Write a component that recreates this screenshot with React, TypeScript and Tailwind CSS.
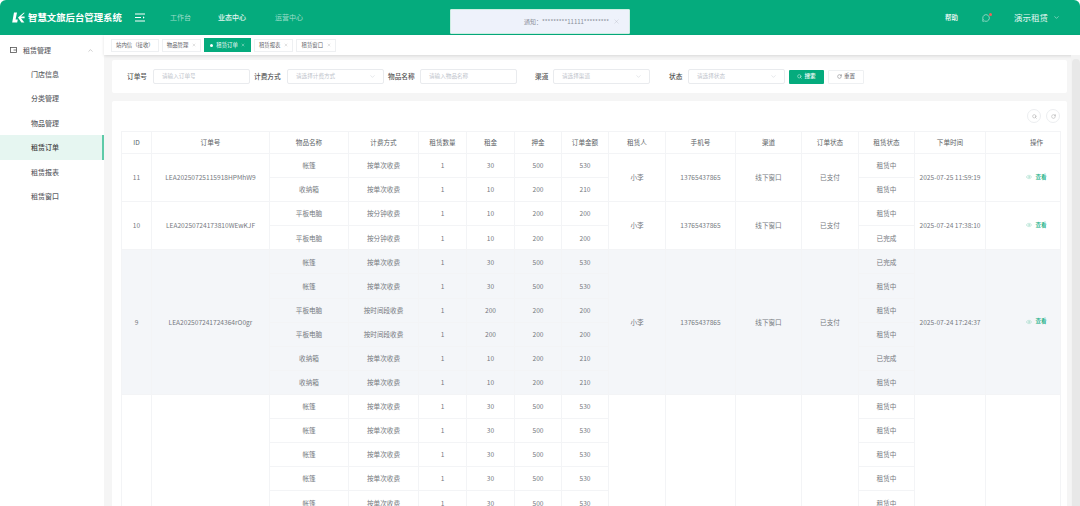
import React from "react";
import { ChevronDown, ChevronUp, Search, RotateCw, X, MessageCircle, Eye } from "lucide-react";

const cols = [31, 118, 79, 70, 48, 48, 47, 47, 57, 70, 66, 57, 56, 71, 75];
const headers = ["ID", "订单号", "物品名称", "计费方式", "租赁数量", "租金", "押金", "订单金额", "租赁人", "手机号", "渠道", "订单状态", "租赁状态", "下单时间", "操作"];

type Item = [string, string, string, string, string, string, string];
const tent = (s: string): Item => ["帐篷", "按单次收费", "1", "30", "500", "530", s];
const box = (s: string): Item => ["收纳箱", "按单次收费", "1", "10", "200", "210", s];
const padMin = (s: string): Item => ["平板电脑", "按分钟收费", "1", "10", "200", "200", s];
const padTime = (s: string): Item => ["平板电脑", "按时间段收费", "1", "200", "200", "200", s];

type Order = { id: string; no: string; person: string; phone: string; channel: string; status: string; time: string; hl?: boolean; action: boolean; items: Item[] };

const orders: Order[] = [
  { id: "11", no: "LEA20250725115918HPMhW9", person: "小李", phone: "13765437865", channel: "线下窗口", status: "已支付", time: "2025-07-25 11:59:19", action: true, items: [tent("租赁中"), box("租赁中")] },
  { id: "10", no: "LEA20250724173810WEwKJF", person: "小李", phone: "13765437865", channel: "线下窗口", status: "已支付", time: "2025-07-24 17:38:10", action: true, items: [padMin("租赁中"), padMin("已完成")] },
  { id: "9", no: "LEA202507241724364rO0gr", person: "小李", phone: "13765437865", channel: "线下窗口", status: "已支付", time: "2025-07-24 17:24:37", hl: true, action: true, items: [tent("已完成"), tent("租赁中"), padTime("租赁中"), padTime("租赁中"), box("已完成"), box("租赁中")] },
  { id: "", no: "", person: "", phone: "", channel: "", status: "", time: "", action: false, items: [tent("租赁中"), tent("租赁中"), tent("租赁中"), tent("租赁中"), tent("租赁中")] },
];

const cell = "border-r border-b border-[#f3f4f6] text-center align-middle p-0";

function OrderRows({ o }: { o: Order }) {
  const n = o.items.length;
  return (
    <>
      {o.items.map((it, i) => (
        <tr key={i} className={`h-[24.1px] ${o.hl ? "bg-[#f4f6f9]" : "bg-white"}`}>
          {i === 0 && <td rowSpan={n} className={`${cell} border-l`}>{o.id}</td>}
          {i === 0 && <td rowSpan={n} className={cell}>{o.no}</td>}
          {it.slice(0, 6).map((v, k) => (
            <td key={k} className={cell}>{v}</td>
          ))}
          {i === 0 && <td rowSpan={n} className={cell}>{o.person}</td>}
          {i === 0 && <td rowSpan={n} className={cell}>{o.phone}</td>}
          {i === 0 && <td rowSpan={n} className={cell}>{o.channel}</td>}
          {i === 0 && <td rowSpan={n} className={cell}>{o.status}</td>}
          <td className={cell}>{it[6]}</td>
          {i === 0 && <td rowSpan={n} className={cell}>{o.time}</td>}
          {i === 0 && (
            <td rowSpan={n} className={`${cell} pl-[27px]`}>
              {o.action && (
                <span className="inline-flex items-center gap-[3px] text-[5.5px] font-medium text-[#05ab7d]">
                  <Eye size={6} strokeWidth={1.5} className="text-[#7fcfb5]" />
                  查看
                </span>
              )}
            </td>
          )}
        </tr>
      ))}
    </>
  );
}

function Field({ label, placeholder, labelW, w, select }: { label: string; placeholder: string; labelW: string; w: string; select?: boolean }) {
  return (
    <div className="flex shrink-0 items-center">
      <span className={`${labelW} text-[6.7px] font-medium text-[#555]`}>{label}</span>
      <div className={`${w} flex h-[15px] items-center justify-between rounded-[2px] border border-[#e9ebee] bg-white pl-[8px] pr-[7px] text-[5.6px] text-[#c0c4cc]`}>
        <span>{placeholder}</span>
        {select && <ChevronDown size={7} strokeWidth={1.2} className="text-[#b8bcc4]" />}
      </div>
    </div>
  );
}

const subs = ["门店信息", "分类管理", "物品管理", "租赁订单", "租赁报表", "租赁窗口"];

export default function App() {
  return (
    <div
      className="relative flex h-[506px] w-[1080px] flex-col overflow-hidden bg-white text-[#606266]"
      style={{ fontFamily: '"Noto Sans CJK SC", "Noto Sans", sans-serif' }}
    >
      {/* header */}
      <header className="flex h-[35px] shrink-0 items-center rounded-t-[6px] bg-[#05ab7d] text-white">
        <div className="flex w-[127px] shrink-0 items-center pl-[12px]">
          <svg width="13" height="11" viewBox="0 0 13 11" className="mr-[3px] shrink-0" fill="white">
            <path d="M2 0.5h3L3.6 7.6h2.2L5.2 10.5H0.2z" />
            <path d="M6 5.6L11.6 0.8h1.2L9 4.6l3.6 0v1.6L9 6.2l3.4 4.3H9.4z" />
          </svg>
          <span className="whitespace-nowrap text-[9.4px] font-bold">智慧文旅后台管理系统</span>
        </div>
        <svg width="10" height="9" viewBox="0 0 10 9" className="ml-[8px] shrink-0" fill="none" stroke="white" strokeWidth="1">
          <path d="M0 1h10M0 4.5h6M0 8h10" />
          <path d="M8 3.2l1.6 1.3L8 5.8z" fill="white" stroke="none" />
        </svg>
        <nav className="ml-[25px] flex items-center text-[7px]">
          <span className="w-[48px] text-white/60">工作台</span>
          <span className="w-[57px] text-white/90 font-medium">业态中心</span>
          <span className="text-white/60">运营中心</span>
        </nav>
        <div className="ml-auto flex items-center">
          <span className="text-[6.5px] font-medium">帮助</span>
          <span className="relative ml-[24px] flex">
            <MessageCircle size={8} strokeWidth={1.5} />
            <span className="absolute -right-[2px] -top-[1px] h-[3px] w-[3px] rounded-full bg-[#f0605a]" />
          </span>
          <span className="ml-[24px] text-[8.5px] text-white/90">演示租赁</span>
          <ChevronDown size={7} strokeWidth={1.5} className="ml-[5px] mr-[20px]" />
        </div>
      </header>

      {/* toast */}
      <div className="absolute left-[450px] top-[9px] z-10 flex h-[25px] w-[180px] items-center rounded-[1px] border border-[#cdeee2] bg-[#eef2fb] pl-[73px] pr-[9px] text-[6px] text-[#8a8f99]">
        <span className="flex-1 whitespace-nowrap">通知：*********11111*********</span>
        <X size={7} strokeWidth={1} className="text-[#a8acb4]" />
      </div>

      <div className="flex min-h-0 flex-1">
        {/* sidebar */}
        <aside className="w-[104px] shrink-0 bg-white pt-[3px] text-[7px] text-[#5f6368]">
          <div className="flex h-[24px] items-center pl-[10px] pr-[10px]">
            <svg width="7" height="6" viewBox="0 0 7 6" fill="none" stroke="#555" strokeWidth="0.8" className="mr-[6px]">
              <rect x="0.5" y="0.5" width="6" height="5" />
              <path d="M3.5 3h3" />
            </svg>
            <span className="font-medium">租赁管理</span>
            <ChevronUp size={7} strokeWidth={1.2} className="ml-auto text-[#777]" />
          </div>
          {subs.map((s) => (
            <div
              key={s}
              className={`flex h-[24.4px] items-center pl-[31px] font-medium ${s === "租赁订单" ? "border-r-[2px] border-[#5fcaa8] bg-[#e6f6f1] text-[#444]" : ""}`}
            >
              {s}
            </div>
          ))}
        </aside>

        <main className="flex min-w-0 flex-1 flex-col bg-[#f5f5f5]">
          {/* tabs */}
          <div className="flex h-[20px] shrink-0 items-center gap-[3px] bg-white pl-[7px] text-[5.4px] text-[#606266] shadow-[0_1px_3px_rgba(0,0,0,0.12)]">
            <span className="flex h-[13px] items-center border border-[#eef0f2] px-[4px]">站内信（接收）</span>
            <span className="flex h-[13px] items-center gap-[4px] border border-[#eef0f2] px-[4px]">物品管理<X size={4} className="text-[#aaa]" /></span>
            <span className="flex h-[14px] items-center gap-[3px] bg-[#05ab7d] px-[6px] text-white">
              <span className="h-[3px] w-[3px] rounded-full bg-white" />租赁订单<X size={4} />
            </span>
            <span className="flex h-[13px] items-center gap-[4px] border border-[#eef0f2] px-[4px]">租赁报表<X size={4} className="text-[#aaa]" /></span>
            <span className="flex h-[13px] items-center gap-[4px] border border-[#eef0f2] px-[4px]">租赁窗口<X size={4} className="text-[#aaa]" /></span>
          </div>

          <div className="flex min-h-0 flex-1">
            <div className="flex min-w-0 flex-1 flex-col pl-[8px] pr-[4px] pt-[5px]">
              {/* filter */}
              <div className="flex h-[33px] shrink-0 items-center rounded-[2px] bg-white pl-[15px]">
                <Field label="订单号" labelW="w-[26px]" w="w-[97px]" placeholder="请输入订单号" />
                <Field label="计费方式" labelW="w-[33px] ml-[4px]" w="w-[97px]" placeholder="请选择计费方式" select />
                <Field label="物品名称" labelW="w-[32px] ml-[4px]" w="w-[97px]" placeholder="请输入物品名称" />
                <Field label="渠道" labelW="w-[18px] ml-[18px]" w="w-[97px]" placeholder="请选择渠道" select />
                <Field label="状态" labelW="w-[19px] ml-[19px]" w="w-[97px]" placeholder="请选择状态" select />
                <button className="ml-[4px] flex h-[14px] w-[35px] items-center justify-center gap-[2px] rounded-[1px] bg-[#05ab7d] text-[5.6px] font-medium text-white">
                  <Search size={5} />搜索
                </button>
                <button className="ml-[4px] flex h-[14px] w-[36px] items-center justify-center gap-[2px] rounded-[1px] border border-[#eef0f2] bg-white text-[5.6px] text-[#606266]">
                  <RotateCw size={5} />重置
                </button>
              </div>

              {/* table card */}
              <div className="mt-[8px] min-h-0 flex-1 overflow-hidden rounded-t-[2px] bg-white pl-[9px] pr-[7px]">
                <div className="flex h-[30px] items-center justify-end gap-[5px]">
                  <span className="flex h-[14px] w-[14px] items-center justify-center rounded-full border border-[#eceef0] text-[#999]">
                    <Search size={5} />
                  </span>
                  <span className="flex h-[14px] w-[14px] items-center justify-center rounded-full border border-[#eceef0] text-[#999]">
                    <RotateCw size={5} />
                  </span>
                </div>
                <table className="table-fixed border-separate border-spacing-0 text-[6.6px] leading-none text-[#757980]" style={{ width: 939 }}>
                  <colgroup>
                    {cols.map((c, i) => (
                      <col key={i} style={{ width: c }} />
                    ))}
                  </colgroup>
                  <thead>
                    <tr className="h-[23px]">
                      {headers.map((h, i) => (
                        <th
                          key={h}
                          className={`border-b border-r border-t border-[#f3f4f6] text-center align-middle font-normal text-[#5c5f66] ${i === 0 ? "border-l" : ""} ${i === 14 ? "pl-[27px]" : ""}`}
                        >
                          {h}
                        </th>
                      ))}
                    </tr>
                  </thead>
                  <tbody>
                    {orders.map((o, i) => (
                      <OrderRows key={i} o={o} />
                    ))}
                  </tbody>
                </table>
              </div>
            </div>
            {/* scrollbar */}
            <div className="w-[9px] shrink-0 bg-[#f3f3f3]">
              <div className="ml-[1px] mt-[4px] h-full w-[8px] rounded-[4px] bg-[#e8e8e8]" />
            </div>
          </div>
        </main>
      </div>
    </div>
  );
}
